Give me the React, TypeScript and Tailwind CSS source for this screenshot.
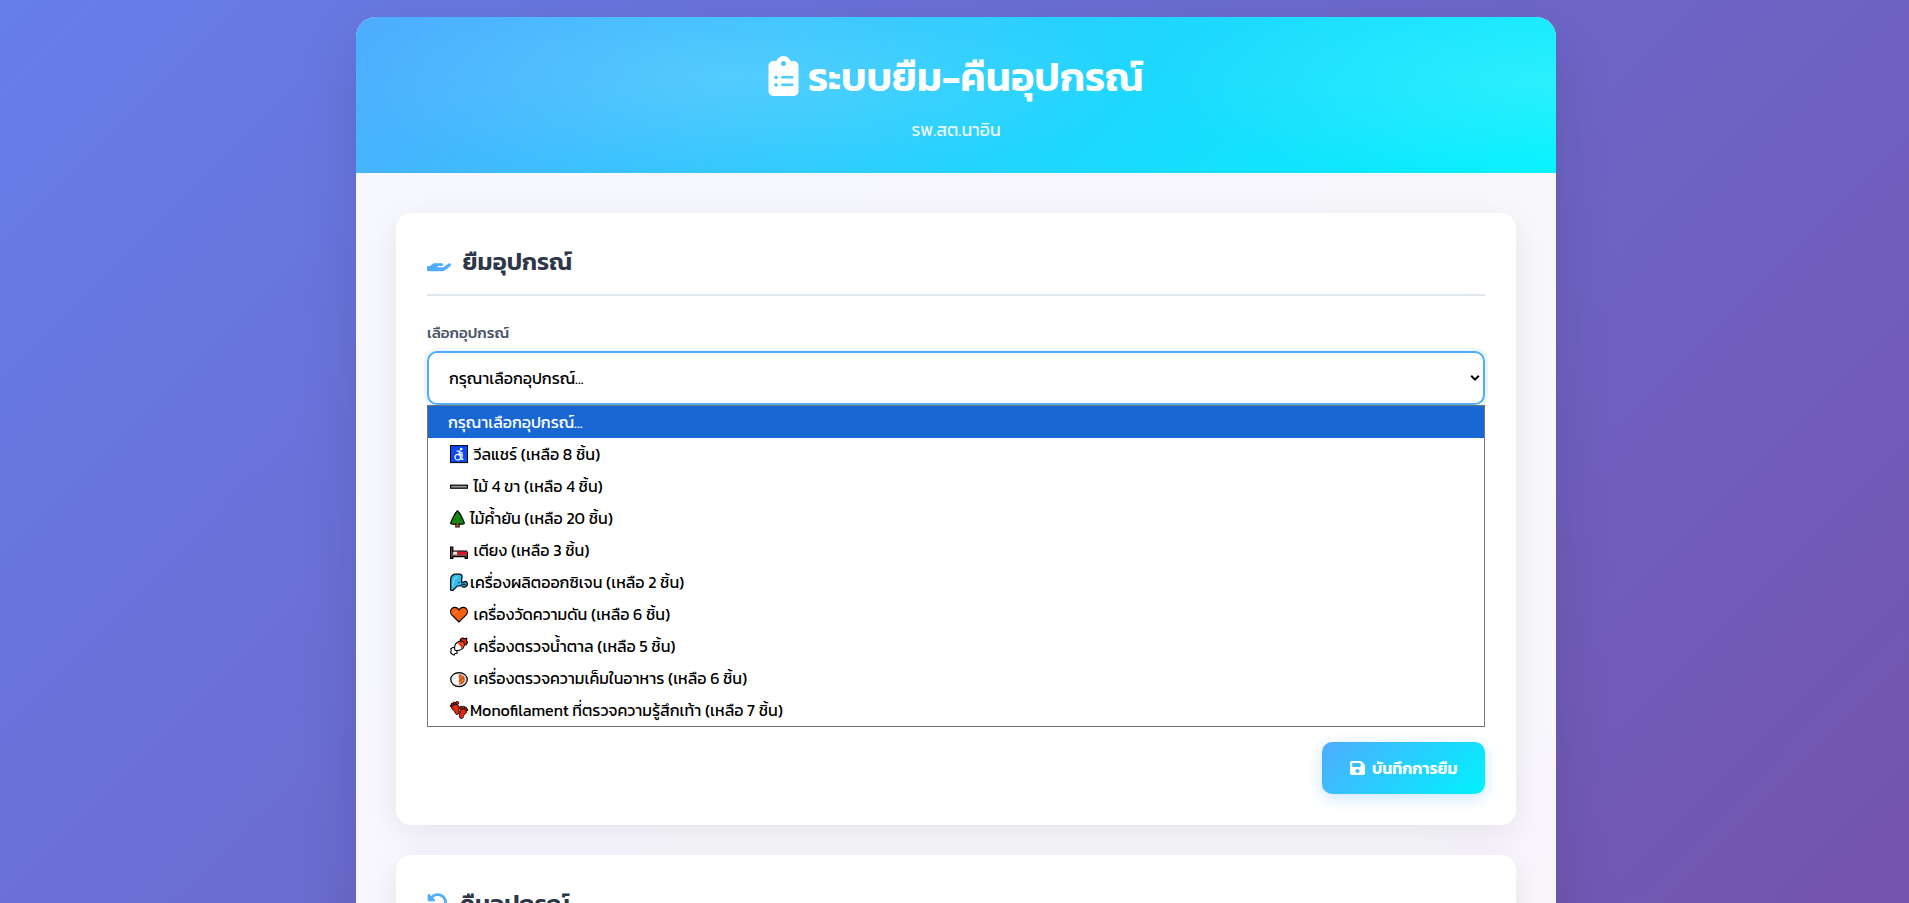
import type { ReactNode } from "react";
import { FaClipboardList, FaFloppyDisk, FaHandHolding, FaRotateLeft } from "react-icons/fa6";

const svgProps = { width: 18, height: 18, viewBox: "0 -0.8 18 18", className: "block shrink-0 overflow-visible" };

const Wheelchair = () => (
  <svg {...svgProps}>
    <rect x=".5" y="-.2" width="17" height="17" fill="#0a48f5" stroke="#000" />
    <circle cx="11.2" cy="3.200" r="1.300" fill="#fff" />
    <path d="M6.400 5.200 10 5.300 8.600 8.900h3.700l-.5 4.600h1.700M10 7h2.800" fill="none" stroke="#fff" strokeWidth="1.200" />
    <circle cx="7.800" cy="11.400" r="2.800" fill="none" stroke="#fff" strokeWidth="1.200" />
  </svg>
);

const Bar = () => (
  <svg {...svgProps}>
    <rect x=".6" y="7.400" width="16.800" height="3" fill="#9b9b9b" stroke="#000" strokeWidth="1.200" />
  </svg>
);

const Tree = () => (
  <svg {...svgProps}>
    <path d="M7.500 1C5.200 3 4 6 2.600 8.600 1.500 10.800.7 12.300.7 13.700c2 1.100 3.700.9 5.200.2v3.300h3.200v-3.300c1.500.7 3.200.9 5.200-.2 0-1.400-.8-2.900-1.900-5.100C11 6 9.800 3 7.500 1z" fill="#138a10" stroke="#000" strokeWidth="1.200" />
    <path d="m7.500 11.800 1.500 5.200H6z" fill="#c1440e" />
    <path d="m4 11.500 1.500-3M11 11.500l-1.300-3" stroke="#0a5c0a" strokeWidth=".9" />
  </svg>
);

const Bed = () => (
  <svg {...svgProps}>
    <path d="M.6 5.200h2.200v5h14.600v6.300h-2.200v-1.700H2.800v1.700H.6z" fill="#7a4f45" stroke="#000" strokeWidth="1.200" />
    <path d="M3.300 9.800h4v3h-4z" fill="#fff" />
    <path d="M7 9.500h9.800v3.200H7z" fill="#e0102a" />
    <path d="M3 9.200h14" stroke="#000" strokeWidth="1" />
  </svg>
);

const Wind = () => (
  <svg {...svgProps}>
    <path d="M.7 16.300V5.600C.7 2.200 3 .4 6 .4h3.400c2 0 3 1.400 2.700 3l-.7 3.600.9 3-1.500 2.200H7.200L3 16.600z" fill="#30bdf0" stroke="#000" strokeWidth="1.200" />
    <path d="M12 8.300c2 .4 2-1 3.300-.7 1.700.3 2.600 2 2 3.600-.7 2-3 2.400-5.600 1.600" fill="#2496c8" stroke="#000" strokeWidth="1.200" />
    <path d="M2.800 12.500C2.800 8 4 4 7 3" fill="none" stroke="#9be4fb" strokeWidth="1" />
    <path d="M12.500 10.600h3M8.200 8.800h1.200" stroke="#000" strokeWidth="1" />
  </svg>
);

const Heart = () => (
  <svg {...svgProps}>
    <path d="M9 16.200 1.800 9C.2 7.200.2 4.400 1.800 2.800 3.600 1 7 1.100 9 4c2-2.900 5.400-3 7.200-1.200 1.600 1.600 1.600 4.400 0 6.200z" fill="#f6610f" stroke="#000" strokeWidth="1.200" />
    <path d="M3.500 8.300 7 5.300" stroke="#ff9557" strokeWidth="1" />
  </svg>
);

const Sugar = () => (
  <svg {...svgProps}>
    <path d="m10.800 4.500-.5-3L12.800.2l1.200.9 2.800-.7-.3 2.700 1 1.500-1.200 2.300-3.300.4z" fill="#e8270f" stroke="#000" strokeWidth="1.100" />
    <path d="m6.500 12.200.6 3.200-2.200.2-.5 1.600-2.100-.8-1.700-1.700.6-1.900-.4-1.800 2.400-1.500 2.300.7z" fill="#fff" stroke="#000" strokeWidth="1.100" />
    <path d="M5 12.400c-1.200-3 .1-6.400 2.400-7.900 2.200-1.500 4.800-1.400 6.400.1.800 2.800-.2 5.600-2.400 7-2 1.300-4.400 1.500-6.400.8z" fill="#fff" stroke="#000" strokeWidth="1.100" />
    <path d="M7 5.300C9.500 3.700 12 3.700 13.400 5c.6 2.700-.2 4.900-2 6.200C11 9 9.600 6.900 7 5.300z" fill="#ef3b12" />
  </svg>
);

const Curry = () => (
  <svg {...svgProps}>
    <ellipse cx="9" cy="9.800" rx="8.300" ry="7" fill="#dcdcdc" stroke="#000" strokeWidth="1.200" />
    <ellipse cx="6.700" cy="9.700" rx="4.500" ry="4.900" fill="#fff" />
    <path d="M8.800 4.600c4 0 6 2.400 6 5.200s-2.400 5-6 5c1-1.700.4-2.600-.4-3.600 1.200-1.400 1.200-2.200.2-3.400z" fill="#d9541c" />
    <path d="M10.500 7.400h1.300M11.800 10.600h1.400M9.800 12.400h1.200" stroke="#f7b733" strokeWidth="1.200" />
    <path d="M4.500 8.600h.9M5.500 11.600h.9" stroke="#8ccf8c" strokeWidth="1" />
  </svg>
);

const Feet = () => (
  <svg {...svgProps}>
    <g fill="#e8270f" stroke="#000" strokeWidth=".9">
      <circle cx="7.200" cy="1.200" r="1.500" />
      <circle cx="4.400" cy="1.400" r="1.200" />
      <circle cx="2.300" cy="2.400" r="1.100" />
      <circle cx="1.200" cy="4.200" r="1" />
      <circle cx="11" cy="6" r="1.500" />
      <circle cx="13.600" cy="5.600" r="1.200" />
      <circle cx="15.700" cy="6.500" r="1.100" />
      <circle cx="16.800" cy="8.200" r="1" />
      <path d="M1.700 5.600C2.200 2.800 7.200 1.700 8.600 4c.9 1.600 0 2.800.3 4.400.4 2 .3 4-1.600 4.300-1.800.2-2.100-1.600-2.700-2.900C4 8.300 1.400 8 1.700 5.600z" />
      <path d="M16.400 9.700c-.6-2.600-4.700-3.700-6.100-1.400-.8 1.300-.1 2.500-.6 3.900-.6 1.800-.5 4.200 1.500 4.500 1.800.2 2-1.500 2.500-2.900.7-1.800 3-1.700 2.700-4.100z" />
    </g>
  </svg>
);

const options: { icon: ReactNode; text: string; tight?: boolean }[] = [
  { icon: <Wheelchair />, text: "วีลแชร์ (เหลือ 8 ชิ้น)" },
  { icon: <Bar />, text: "ไม้ 4 ขา (เหลือ 4 ชิ้น)" },
  { icon: <Tree />, text: "ไม้ค้ำยัน (เหลือ 20 ชิ้น)", tight: true },
  { icon: <Bed />, text: "เตียง (เหลือ 3 ชิ้น)" },
  { icon: <Wind />, text: "เครื่องผลิตออกซิเจน (เหลือ 2 ชิ้น)", tight: true },
  { icon: <Heart />, text: "เครื่องวัดความดัน (เหลือ 6 ชิ้น)" },
  { icon: <Sugar />, text: "เครื่องตรวจน้ำตาล (เหลือ 5 ชิ้น)" },
  { icon: <Curry />, text: "เครื่องตรวจความเค็มในอาหาร (เหลือ 6 ชิ้น)" },
  { icon: <Feet />, text: "Monofilament ที่ตรวจความรู้สึกเท้า (เหลือ 7 ชิ้น)", tight: true },
];

function CardTitle({ icon, children }: { icon: ReactNode; children: ReactNode }) {
  return (
    <h2 className="flex h-[52px] items-start gap-[11.5px] border-b-2 border-[#e2e8f0] text-2xl leading-[36px] font-semibold text-[#2d3748]">
      <span className="flex h-[34px] items-center text-[#4facfe]">{icon}</span>
      {children}
    </h2>
  );
}

const cardClass = "rounded-[15px] bg-white p-[31px] shadow-[0_8px_32px_rgba(0,0,0,0.08)]";

export default function App() {
  return (
    <div className="h-[903px] overflow-hidden bg-[linear-gradient(135deg,#667eea_0%,#764ba2_100%)] bg-[length:100%_1450px] bg-no-repeat pt-[17px] font-['Kanit',sans-serif]">
      <div className="ml-[356px] h-[1200px] w-[1200px] overflow-hidden rounded-t-[20px] bg-white/95 shadow-[0_20px_60px_rgba(0,0,0,0.12)]">
        <header className="flex h-[156px] flex-col items-center bg-[radial-gradient(ellipse_400px_110px_at_379px_61px,rgba(255,255,255,0.15),transparent),radial-gradient(ellipse_400px_110px_at_1200px_63px,rgba(255,255,255,0.15),transparent),linear-gradient(135deg,#4facfe_0%,#00f2fe_100%)] pt-[30px] text-white">
          <h1 className="flex h-[60px] items-center text-[40px] leading-[60px] font-semibold">
            <FaClipboardList className="mr-[8.500px] mb-[2px] h-10 w-[31px]" />
            ระบบยืม-คืนอุปกรณ์
          </h1>
          <p className="mt-[10px] text-[17.6px] leading-[26px] opacity-90">รพ.สต.นาอิน</p>
        </header>

        <main className="flex flex-col gap-[30px] p-10">
          <section className={`${cardClass} flex h-[612px] flex-col`}>
            <CardTitle icon={<FaHandHolding className="h-[21.3px] w-6" />}>ยืมอุปกรณ์</CardTitle>
            <label className="mt-[25px] text-[15.2px] leading-[23px] font-medium text-[#4a5568]">เลือกอุปกรณ์</label>
            <div className="relative mt-[7px]">
              <div className="flex h-[54px] items-center justify-between rounded-[10px] border-2 border-[#4facfe] bg-white pr-[3px] pl-5 text-base text-black shadow-[0_0_0_3px_rgba(79,172,254,0.1)]">
                กรุณาเลือกอุปกรณ์...
                <svg width="10" height="8" viewBox="0 0 10 8">
                  <path d="m1.200 1.800 3.800 3.800 3.800-3.800" fill="none" stroke="#000" strokeWidth="2" />
                </svg>
              </div>
              <ul className="absolute top-[54px] left-0 z-10 w-full border border-[#767676] bg-white text-base leading-8 text-black">
                <li className="h-8 bg-[#1967d2] pl-5 text-white">กรุณาเลือกอุปกรณ์...</li>
                {options.map((o) => (
                  <li key={o.text} className={`flex h-8 items-center pl-[22px] ${o.tight ? "gap-[2px]" : "gap-[5.500px]"}`}>
                    {o.icon}
                    {o.text}
                  </li>
                ))}
              </ul>
            </div>
            <button className="mt-auto flex h-[52px] w-[163px] items-center gap-[7px] self-end rounded-[10px] bg-[linear-gradient(135deg,#4facfe_0%,#00f2fe_100%)] pl-7 text-base font-semibold whitespace-nowrap text-white shadow-[0_4px_15px_rgba(79,172,254,0.3)]">
              <FaFloppyDisk className="h-4 w-[15px]" preserveAspectRatio="none" />
              บันทึกการยืม
            </button>
          </section>

          <section className={cardClass}>
            <CardTitle icon={<FaRotateLeft className="size-[21.3px]" />}>คืนอุปกรณ์</CardTitle>
          </section>
        </main>
      </div>
    </div>
  );
}
